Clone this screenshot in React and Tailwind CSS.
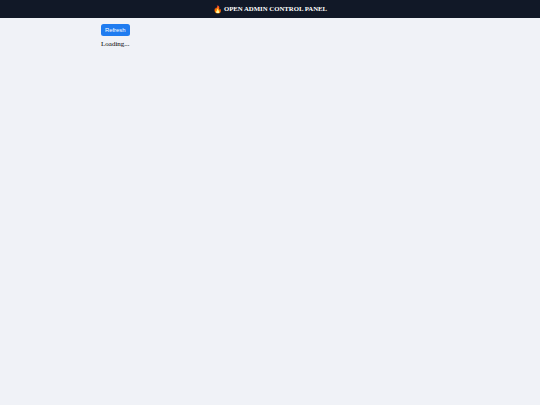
import React from 'react';

export default function App() {
  return (
    <div className="min-h-[405px] bg-[#f0f2f7] font-['Liberation_Serif',serif] text-black">
      <header className="h-[18px] pt-[1px] bg-[#111827] flex items-center justify-center text-white text-[6.75px] font-bold">
        <span className="font-['Noto_Sans',sans-serif] text-[7.5px] mr-[2px]">🔥</span>
        <span>OPEN ADMIN CONTROL PANEL</span>
      </header>
      <main className="w-[338px] mx-auto pt-[6px]">
        <button className="block h-[12px] w-[28.5px] rounded-[2.5px] bg-[#1f7cf0] text-white text-[5.9px] leading-[12px] text-center font-['Liberation_Sans',sans-serif]">
          Refresh
        </button>
        <p className="mt-[3px] text-[7px] leading-[10px]">Loading...</p>
      </main>
    </div>
  );
}
